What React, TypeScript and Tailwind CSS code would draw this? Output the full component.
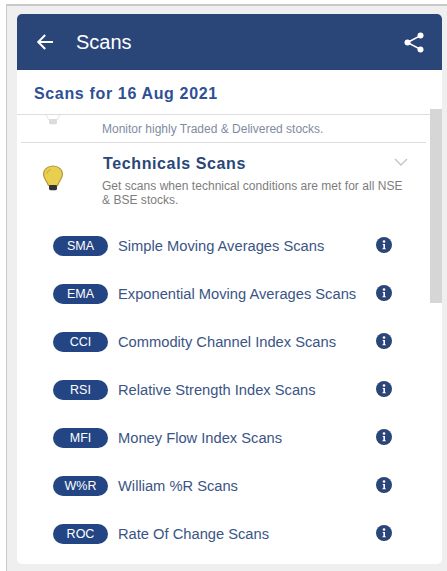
import React from "react";

const rows = [
  ["SMA", "Simple Moving Averages Scans"],
  ["EMA", "Exponential Moving Averages Scans"],
  ["CCI", "Commodity Channel Index Scans"],
  ["RSI", "Relative Strength Index Scans"],
  ["MFI", "Money Flow Index Scans"],
  ["W%R", "William %R Scans"],
  ["ROC", "Rate Of Change Scans"],
];

function Bulb({ faded }: { faded?: boolean }) {
  return (
    <svg width="22" height="26" viewBox="0 0 22 26" className="block">
      <path
        d="M11 1C5.5 1 1.5 4.6 1.5 9.3c0 3.8 3.2 6.4 5 11.2h9c1.8-4.8 5-7.4 5-11.2C20.5 4.6 16.5 1 11 1z"
        fill={faded ? "#ffffff" : "#e9cf4f"}
        stroke={faded ? "#dddddd" : "#b9953a"}
        strokeWidth="1.2"
      />
      <path d="M5 8.5C5.5 6.5 7 5 9 4.6" fill="none" stroke={faded ? "#eeeeee" : "#b9953a"} strokeWidth="0.8" />
      <rect x="7" y="20" width="8" height="5.2" rx="1.4" fill={faded ? "#c4c4c4" : "#33333a"} />
    </svg>
  );
}

function Info() {
  return (
    <svg width="16" height="16" viewBox="0 0 16 16" className="mb-[2px] block">
      <circle cx="8" cy="8" r="8" fill="#2a4679" />
      <circle cx="8" cy="4.5" r="1.3" fill="#ffffff" />
      <path d="M6.7 7h2.3v4.3h.7v1H6.5v-1h.9V8h-.7z" fill="#ffffff" />
    </svg>
  );
}

export default function App() {
  return (
    <div className="relative h-[571px] w-[447px] overflow-hidden bg-white font-['Liberation_Sans',Arial,sans-serif]">
      <div className="ml-[6px] mt-[4px] h-[567px] border-l border-t-2 border-[#c9c9c9] bg-[#efefef] pl-[10px] pr-[5px] pt-[8px]">
        <div className="relative h-[550px] w-[425px] overflow-hidden rounded-[5px] bg-white">
          <header className="flex h-[56px] items-center justify-between bg-[#2a4679] pl-[19px] pr-[18px] text-white">
            <div className="flex items-center gap-[22px]">
              <svg width="18" height="18" viewBox="0 0 18 18" fill="none" stroke="#ffffff" strokeWidth="2" className="block">
                <path d="M17 9H2.5M9.2 2L2.2 9l7 7" />
              </svg>
              <span className="text-[20px] leading-[24px]">Scans</span>
            </div>
            <svg width="20" height="21" viewBox="0 0 20 21" fill="#ffffff" className="block">
              <circle cx="16.5" cy="3.6" r="3" />
              <circle cx="16.5" cy="17.4" r="3" />
              <circle cx="3.5" cy="10.5" r="3" />
              <path d="M3.5 10.5L16.5 3.6M3.5 10.5l13 6.9" stroke="#ffffff" strokeWidth="1.6" />
            </svg>
          </header>

          <div className="flex h-[45px] items-center border-b border-[#dddddd] pl-[17px] pt-[3px]">
            <h1 className="text-[16px] font-bold leading-[20px] tracking-[0.65px] text-[#2f4f95]">Scans for 16 Aug 2021</h1>
          </div>

          <div className="relative h-[27px] overflow-hidden pl-[85px] pt-[7px]">
            <div className="absolute left-[25px] top-[-16px] opacity-60">
              <Bulb faded />
            </div>
            <p className="text-[12px] leading-[14px] text-[#7f8c9f]">Monitor highly Traded &amp; Delivered stocks.</p>
          </div>

          <div className="ml-[4px] mr-[16px] border-t border-[#dddddd]" />

          <section className="relative h-[69px] pl-[86px] pr-[34px] pt-[11px]">
            <div className="absolute left-[25px] top-[22px]">
              <Bulb />
            </div>
            <h2 className="text-[16px] font-bold leading-[20px] tracking-[0.62px] text-[#2a4679]">Technicals Scans</h2>
            <p className="ml-[-1px] mt-[5px] text-[12px] leading-[14px] tracking-[0.03px] text-[#7d7d7d]">
              Get scans when technical conditions are met for all NSE &amp; BSE stocks.
            </p>
            <svg width="14" height="8" viewBox="0 0 14 8" fill="none" stroke="#c4c4c4" strokeWidth="1.4" className="absolute right-[34px] top-[15px] block">
              <path d="M1 1l6 6 6-6" />
            </svg>
          </section>

          <ul className="flex flex-col pl-[36px] pr-[50px] pt-[10px]">
            {rows.map(([tag, label]) => (
              <li key={tag} className="flex h-[48px] items-center">
                <span className="flex h-[20px] w-[55px] shrink-0 items-center justify-center rounded-full bg-[#234584] text-[12.5px] text-white">
                  {tag}
                </span>
                <span className="ml-[10px] flex-1 text-[14.7px] text-[#3a5585]">{label}</span>
                <Info />
              </li>
            ))}
          </ul>

          <div className="absolute right-0 top-[95px] h-[194px] w-[12px] bg-[#d6d6d6]" />
        </div>
      </div>
    </div>
  );
}
